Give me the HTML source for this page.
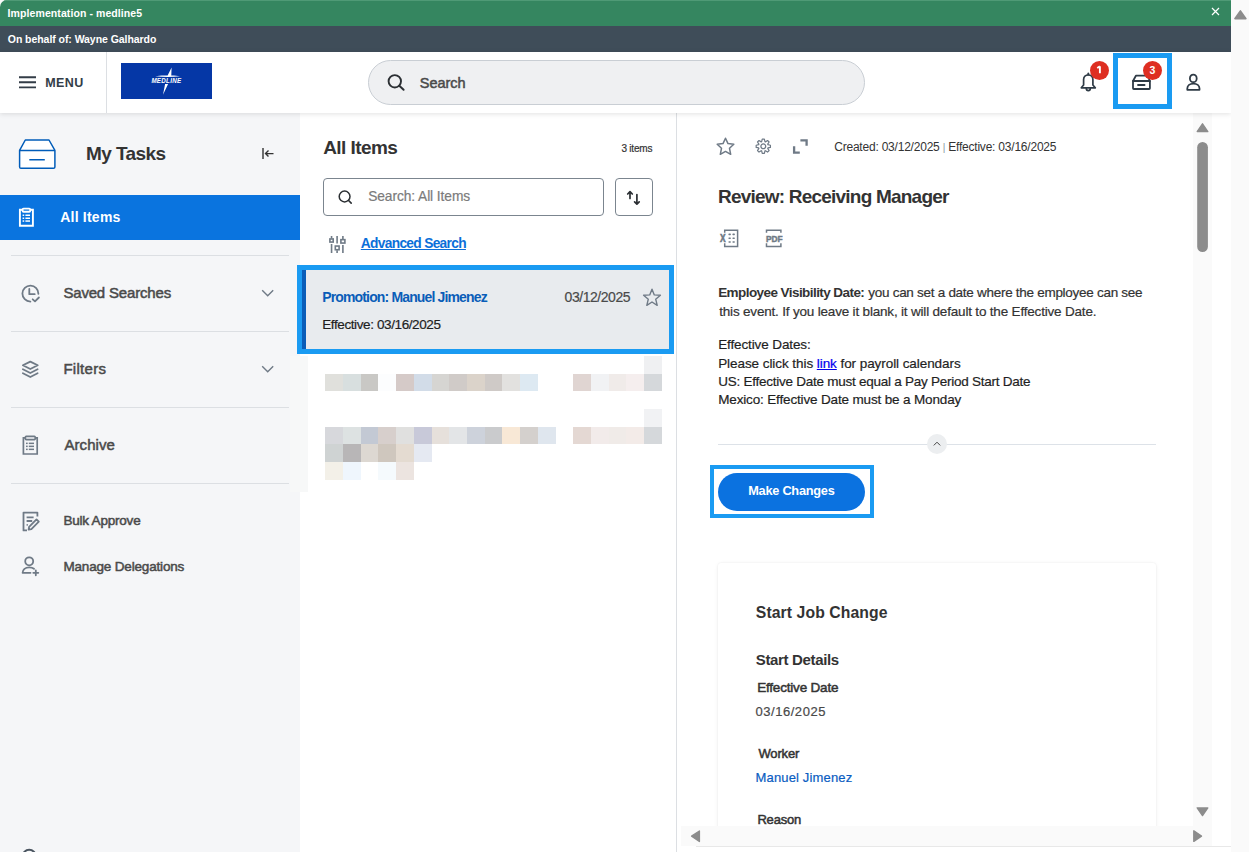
<!DOCTYPE html>
<html><head><meta charset="utf-8">
<style>
*{box-sizing:border-box;margin:0;padding:0}
html,body{width:1249px;height:852px;overflow:hidden;background:#fafafa;font-family:"Liberation Sans",sans-serif;color:#333}
.a{position:absolute}
.t{position:absolute;white-space:nowrap;line-height:normal;z-index:5}
.bl{display:inline-block;width:0;height:0;vertical-align:baseline}
.m{-webkit-text-stroke:0.5px currentColor}
.r2{-webkit-text-stroke:0.2px currentColor}
svg{position:absolute;overflow:visible}
#win{position:absolute;left:0;top:0;width:1231px;height:852px;background:#fff;overflow:hidden;border-top-left-radius:7px}
.div{position:absolute;left:11px;width:278px;height:1px;background:#dcdfe3}
.ic{fill:none;stroke:#6f7a86;stroke-width:1.8;stroke-linecap:round;stroke-linejoin:round}
.ik{fill:none;stroke:#2f3b46;stroke-width:1.8;stroke-linecap:round;stroke-linejoin:round}
</style></head><body>
<div id="win">
  <!-- top bars -->
  <div class="a" style="left:0;top:0;width:1231px;height:26px;background:#358660"></div>
  <div class="a" style="left:0;top:0;width:1231px;height:1px;background:#4f9a76"></div>
  <div class="a" style="left:0;top:26px;width:1231px;height:26px;background:#3f4d59"></div>
  <svg style="left:1212px;top:8px" width="7" height="7" viewBox="0 0 7 7"><path d="M0 0L7 7M7 0L0 7" stroke="#fff" stroke-width="1.2"/></svg>

  <!-- header -->
  <div class="a" style="left:0;top:52px;width:1231px;height:61px;background:#fff;box-shadow:0 1px 5px rgba(0,0,0,.12);z-index:3"></div>
  <div style="position:absolute;left:0;top:52px;width:1231px;height:61px;z-index:4">
    <svg style="left:19px;top:24px" width="17" height="12" viewBox="0 0 17 12"><path d="M0 1.2H17M0 6.3H17M0 11.4H17" stroke="#333d47" stroke-width="1.9"/></svg>
    <div class="a" style="left:106px;top:0;width:1px;height:61px;background:#dcdfe3"></div>
    <div class="a" style="left:121px;top:11px;width:91px;height:36px;background:#0537a6"></div>
    <svg style="left:121px;top:11px" width="91" height="36" viewBox="0 0 91 36">
      <path d="M34.2 13.3Q47 11.3 59.1 13.3Q47 14.9 34.2 13.3Z M46.6 12.4L50.6 4.4L50.3 12.4Z M44.1 20.9L47.1 20.9L42 31.8Z" fill="#fff"/>
      <text x="30.4" y="19.8" font-family="Liberation Sans" font-weight="bold" font-style="italic" font-size="6.3" fill="#fff" letter-spacing="0.3" textLength="30" lengthAdjust="spacingAndGlyphs">MEDLINE</text>
    </svg>
    <div class="a" style="left:368px;top:8px;width:497px;height:45px;border-radius:23px;background:#eff0f2;border:1px solid #c9ced4"></div>
    <svg style="left:386px;top:72px;top:20px" width="20" height="20" viewBox="0 0 20 20"><circle cx="8.8" cy="9.3" r="6.2" fill="none" stroke="#2b2f33" stroke-width="1.9"/><path d="M13.3 13.8L17.6 17.8" stroke="#2b2f33" stroke-width="2" stroke-linecap="round"/></svg>
    <!-- bell -->
    <svg style="left:1076px;top:6px" width="36" height="36" viewBox="0 0 36 36"><g class="ik" style="stroke-width:1.7">
      <path d="M7.6 27V21.5C7.6 18.8 9.7 16.8 12.3 16.8C14.9 16.8 16.9 18.8 16.9 21.5V27L19.3 29.8H5.3Z"/>
      <path d="M10.3 30.6A2 2 0 0 0 14.3 30.6"/>
      <path d="M12.3 15.3V16.6"/></g></svg>
    <div class="a" style="left:1090px;top:9px;width:19px;height:19px;border-radius:50%;background:#de2e21"></div>
    <!-- inbox focus -->
    <div class="a" style="left:1113px;top:1px;width:59px;height:56px;border:5px solid #1a9bf2"></div>
    <svg style="left:1126px;top:6px" width="40" height="36" viewBox="0 0 40 36"><g class="ik">
      <path d="M9.9 17.7H21.5L23.9 23V30.2Q23.9 31 23.1 31H7.8Q7 31 7 30.2V23Z"/>
      <path d="M7 23H23.9"/><path d="M12 27H18.6"/></g></svg>
    <div class="a" style="left:1143px;top:9px;width:19px;height:19px;border-radius:50%;background:#de2e21"></div>
    <!-- person -->
    <svg style="left:1180px;top:16px" width="26" height="26" viewBox="0 0 26 26"><g class="ik">
      <ellipse cx="13.3" cy="10.4" rx="3.4" ry="3.8"/>
      <path d="M7.3 21.8V20.6C7.3 17.6 9.8 15.6 13.4 15.6C17 15.6 19.5 17.6 19.5 20.6V21.8Z"/></g></svg>
  </div>

  <!-- sidebar -->
  <div class="a" style="left:0;top:113px;width:300px;height:739px;background:#f5f6f8"></div>
  <svg style="left:14px;top:134px" width="48" height="40" viewBox="0 0 48 40">
    <path d="M11.3 6H35L40.9 16.4V33Q40.9 34.3 39.5 34.3H7Q5.6 34.3 5.6 33V16.4Z" fill="#fff" stroke="#005cb9" stroke-width="1.5" stroke-linejoin="round"/>
    <path d="M5.6 16.4H40.9M15.3 25.7H30.8" stroke="#005cb9" stroke-width="1.5" fill="none"/></svg>
  <svg style="left:256px;top:140px" width="24" height="24" viewBox="0 0 24 24"><path d="M7 8V19M17.5 13.6H9.5M12.5 10.6L9.5 13.6L12.5 16.6" fill="none" stroke="#333" stroke-width="1.4"/></svg>
  <div class="a" style="left:0;top:195px;width:300px;height:45px;background:#0a74df"></div>
  <svg style="left:14px;top:200px" width="30" height="32" viewBox="0 0 30 32"><g fill="none" stroke="#fff" stroke-width="1.9">
    <path d="M8.3 9.8H5.9V25.8H18.9V9.8H16.5"/>
    <rect x="8.6" y="8.6" width="7.6" height="3.2" rx="1"/></g>
    <g fill="#fff"><rect x="8.6" y="14.5" width="1.6" height="1.5"/><rect x="11.4" y="14.5" width="4.6" height="1.5"/>
    <rect x="8.6" y="17.5" width="1.6" height="1.5"/><rect x="11.4" y="17.5" width="4.6" height="1.5"/>
    <rect x="8.6" y="20.3" width="1.6" height="1.5"/><rect x="11.4" y="20.3" width="4.6" height="1.5"/></g></svg>
  <div class="div" style="top:255px"></div>
  <svg style="left:16px;top:278px" width="30" height="30" viewBox="0 0 30 30"><g class="ic">
    <path d="M14.4 23.6A8 8 0 1 1 22.4 15.8"/><path d="M13.3 11V16.2H18.7"/><path d="M16.7 21.3L19 23.4L22.9 19.5"/></g></svg>
  <svg style="left:256px;top:282px" width="24" height="24" viewBox="0 0 24 24"><path d="M6.2 8.3L11.7 13.8L17.2 8.3" fill="none" stroke="#6f7a86" stroke-width="1.4"/></svg>
  <div class="div" style="top:331px"></div>
  <svg style="left:16px;top:354px" width="30" height="30" viewBox="0 0 30 30"><g class="ic">
    <path d="M14.3 7.6L21.7 11.3L14.3 15L6.9 11.3Z"/><path d="M6.9 15.3L14.3 19L21.6 15.3"/><path d="M6.9 19.2L14.3 23L21.6 19.2"/></g></svg>
  <svg style="left:256px;top:358px" width="24" height="24" viewBox="0 0 24 24"><path d="M6.2 8.3L11.7 13.8L17.2 8.3" fill="none" stroke="#6f7a86" stroke-width="1.4"/></svg>
  <div class="div" style="top:407px"></div>
  <svg style="left:16px;top:428px" width="30" height="32" viewBox="0 0 30 32"><g fill="none" stroke="#6f7a86" stroke-width="1.7">
    <path d="M9.3 9.8H7.4V26H21.2V9.8H19.3"/>
    <rect x="9.4" y="8.4" width="9.8" height="3.2" rx="0.8"/></g>
    <g fill="#6f7a86"><rect x="10" y="14.6" width="1.7" height="1.5"/><rect x="12.8" y="14.6" width="5.2" height="1.5"/>
    <rect x="10" y="17.6" width="1.7" height="1.5"/><rect x="12.8" y="17.6" width="5.2" height="1.5"/>
    <rect x="10" y="20.6" width="1.7" height="1.5"/><rect x="12.8" y="20.6" width="5.2" height="1.5"/></g></svg>
  <div class="div" style="top:483px"></div>
  <svg style="left:16px;top:505px" width="30" height="30" viewBox="0 0 30 30"><g class="ic" style="stroke-linecap:butt">
    <path d="M11 25.4H7.5V7.6H21.4V11.5"/><path d="M10.6 12.3H17.6M10.6 16H16.2M10.6 19.8H11.8"/>
    <path d="M12.6 24.6L13.1 21.8L20.5 14.4L22.8 16.7L15.4 24.1Z"/></g></svg>
  <svg style="left:16px;top:505px" width="30" height="75" viewBox="0 0 30 75"><g class="ic">
    <circle cx="13.2" cy="56.3" r="4"/><path d="M14.5 67.8H6.6C6.6 64.6 9.3 62.3 13.2 62.3C15.2 62.3 16.8 62.8 18 63.8"/>
    <path d="M19.8 65.3V70.3M17.3 67.8H22.3"/></g></svg>
  <svg style="left:10px;top:830px" width="50" height="30" viewBox="0 0 50 30"><circle cx="19.2" cy="26.3" r="6.5" fill="none" stroke="#4a5560" stroke-width="2"/></svg>

  <!-- middle -->
  <div class="a" style="left:676px;top:113px;width:1px;height:739px;background:#dcdfe3"></div>
  <div class="a" style="left:323px;top:178px;width:281px;height:37.5px;border:1px solid #7b858f;border-radius:4px"></div>
  <svg style="left:324px;top:182px" width="32" height="30" viewBox="0 0 32 30"><circle cx="20.6" cy="14.5" r="5.4" fill="none" stroke="#2b2f33" stroke-width="1.5"/><path d="M24.6 18.5L27.2 21.1" stroke="#2b2f33" stroke-width="1.6" stroke-linecap="round"/></svg>
  <div class="a" style="left:615px;top:178px;width:38px;height:37.5px;border:1px solid #7b858f;border-radius:4px"></div>
  <svg style="left:616px;top:180px" width="36" height="36" viewBox="0 0 36 36"><g fill="none" stroke="#2b2f33" stroke-width="1.7" stroke-linecap="round" stroke-linejoin="round">
    <path d="M14 11.8V18.4M11.7 14L14 11.6L16.3 14"/><path d="M20.9 14.6V24M18.6 21.8L20.9 24.2L23.2 21.8"/></g></svg>
  <svg style="left:324px;top:230px" width="32" height="30" viewBox="0 0 32 30"><g stroke="#6f7a86" stroke-width="1.6" fill="none">
    <path d="M7.56 5.9V8.4M7.56 14.1V22.9M13.1 5.9V13.6M13.1 20.3V22.9M18.9 5.9V9.1M18.9 15.1V22.9"/>
    <rect x="5.9" y="8.95" width="3.3" height="3.1"/><rect x="11.3" y="16.05" width="3.8" height="3.7"/><rect x="16.9" y="9.65" width="4" height="3.4"/></g></svg>
  <!-- selected item -->
  <div class="a" style="left:297px;top:265px;width:377px;height:89px;border:5px solid #1a9bf2;background:#e8ebee"></div>
  <div class="a" style="left:302px;top:270px;width:4px;height:79px;background:#0a5db8"></div>
  <svg style="left:640px;top:285px" width="24" height="24" viewBox="0 0 24 24"><path d="M12 4.2L14.3 9.9L20.4 10.3L15.7 14.2L17.2 20.3L12 17L6.8 20.3L8.3 14.2L3.6 10.3L9.7 9.9Z" fill="none" stroke="#6f7a86" stroke-width="1.4" stroke-linejoin="round"/></svg>
  <div class="a" style="left:290px;top:356px;width:18px;height:136px;background:#f7f8f8"></div>
<div class="a" style="left:644px;top:356px;width:18px;height:18px;background:#eff0f2"></div>
<div class="a" style="left:325px;top:374px;width:18px;height:17px;background:#e0e0dc"></div>
<div class="a" style="left:343px;top:374px;width:18px;height:17px;background:#d8dfdf"></div>
<div class="a" style="left:361px;top:374px;width:17px;height:17px;background:#c9c8c5"></div>
<div class="a" style="left:378px;top:374px;width:18px;height:17px;background:#fcfdfe"></div>
<div class="a" style="left:396px;top:374px;width:18px;height:17px;background:#d5cac8"></div>
<div class="a" style="left:414px;top:374px;width:18px;height:17px;background:#d2dce8"></div>
<div class="a" style="left:432px;top:374px;width:17px;height:17px;background:#d6d5d2"></div>
<div class="a" style="left:449px;top:374px;width:18px;height:17px;background:#d0cbc8"></div>
<div class="a" style="left:467px;top:374px;width:18px;height:17px;background:#dbd3ca"></div>
<div class="a" style="left:485px;top:374px;width:17px;height:17px;background:#cfcac7"></div>
<div class="a" style="left:502px;top:374px;width:18px;height:17px;background:#e2e1df"></div>
<div class="a" style="left:520px;top:374px;width:18px;height:17px;background:#dde9f2"></div>
<div class="a" style="left:573px;top:374px;width:18px;height:17px;background:#e0d5d2"></div>
<div class="a" style="left:591px;top:374px;width:18px;height:17px;background:#f1f2f4"></div>
<div class="a" style="left:609px;top:374px;width:17px;height:17px;background:#f0ebe9"></div>
<div class="a" style="left:626px;top:374px;width:18px;height:17px;background:#f5eeee"></div>
<div class="a" style="left:644px;top:374px;width:18px;height:17px;background:#d5d8db"></div>
<div class="a" style="left:644px;top:409px;width:18px;height:18px;background:#f1f2f4"></div>
<div class="a" style="left:325px;top:427px;width:18px;height:17px;background:#d7d8dc"></div>
<div class="a" style="left:343px;top:427px;width:18px;height:17px;background:#dde2e2"></div>
<div class="a" style="left:361px;top:427px;width:17px;height:17px;background:#c3c9d4"></div>
<div class="a" style="left:378px;top:427px;width:18px;height:17px;background:#d7cfcc"></div>
<div class="a" style="left:396px;top:427px;width:18px;height:17px;background:#e0e0df"></div>
<div class="a" style="left:414px;top:427px;width:18px;height:17px;background:#c8c9d9"></div>
<div class="a" style="left:432px;top:427px;width:17px;height:17px;background:#e6e0db"></div>
<div class="a" style="left:449px;top:427px;width:18px;height:17px;background:#e3e5e7"></div>
<div class="a" style="left:467px;top:427px;width:18px;height:17px;background:#cdd2db"></div>
<div class="a" style="left:485px;top:427px;width:17px;height:17px;background:#cacbcd"></div>
<div class="a" style="left:502px;top:427px;width:18px;height:17px;background:#f8e8d6"></div>
<div class="a" style="left:520px;top:427px;width:18px;height:17px;background:#d4d0cd"></div>
<div class="a" style="left:538px;top:427px;width:18px;height:17px;background:#dfe6ee"></div>
<div class="a" style="left:573px;top:427px;width:18px;height:17px;background:#e4d8d3"></div>
<div class="a" style="left:591px;top:427px;width:18px;height:17px;background:#f2ebea"></div>
<div class="a" style="left:609px;top:427px;width:17px;height:17px;background:#f0ebe8"></div>
<div class="a" style="left:626px;top:427px;width:18px;height:17px;background:#f3ebe8"></div>
<div class="a" style="left:644px;top:427px;width:18px;height:17px;background:#d5d8db"></div>
<div class="a" style="left:325px;top:444px;width:18px;height:18px;background:#cfd3d3"></div>
<div class="a" style="left:343px;top:444px;width:18px;height:18px;background:#b8b6b7"></div>
<div class="a" style="left:361px;top:444px;width:17px;height:18px;background:#ddd8d2"></div>
<div class="a" style="left:378px;top:444px;width:18px;height:18px;background:#cfc7be"></div>
<div class="a" style="left:396px;top:444px;width:18px;height:18px;background:#e4dbd1"></div>
<div class="a" style="left:414px;top:444px;width:18px;height:18px;background:#e5e9f2"></div>
<div class="a" style="left:325px;top:462px;width:18px;height:18px;background:#f3f0e8"></div>
<div class="a" style="left:343px;top:462px;width:18px;height:18px;background:#eff6fd"></div>
<div class="a" style="left:378px;top:462px;width:18px;height:18px;background:#f5fafd"></div>
<div class="a" style="left:396px;top:462px;width:18px;height:18px;background:#ece4e0"></div>

  <!-- right panel -->
  <svg style="left:712px;top:132px" width="100" height="28" viewBox="0 0 100 28"><g fill="none" stroke="#6f7a86" stroke-width="1.5" stroke-linejoin="round">
    <path d="M13.5 6.3L16 11.6L21.8 12.3L17.5 16.3L18.7 22.3L13.5 19.4L8.3 22.3L9.5 16.3L5.2 12.3L11 11.6Z"/></g>
    <g transform="translate(51.3 14.3)"><path id="gear" d="M-1.63 -4.62 L-1.08 -7.12 L1.08 -7.12 L1.63 -4.62 L2.11 -4.42 L4.27 -5.79 L5.79 -4.27 L4.42 -2.11 L4.62 -1.63 L7.12 -1.08 L7.12 1.08 L4.62 1.63 L4.42 2.11 L5.79 4.27 L4.27 5.79 L2.11 4.42 L1.63 4.62 L1.08 7.12 L-1.08 7.12 L-1.63 4.62 L-2.11 4.42 L-4.27 5.79 L-5.79 4.27 L-4.42 2.11 L-4.62 1.63 L-7.12 1.08 L-7.12 -1.08 L-4.62 -1.63 L-4.42 -2.11 L-5.79 -4.27 L-4.27 -5.79 L-2.11 -4.42Z" fill="none" stroke="#6f7a86" stroke-width="1.2" stroke-linejoin="round"/><circle r="2.4" fill="none" stroke="#6f7a86" stroke-width="1.3"/></g>
    <path d="M88.4 8.3H94.6V13.8M82.1 14.3V20.7H87.8" fill="none" stroke="#6f7a86" stroke-width="2.3"/></svg>
  <svg style="left:714px;top:224px" width="76" height="28" viewBox="0 0 76 28"><g fill="none" stroke="#6f7a86" stroke-width="1.5">
    <path d="M10.7 8.8V6.2H23.6V22.4H10.7V19.2"/><path d="M52.5 8.8V6.2H66.9V8.8M52.5 19.3V22.4H66.9V19.3"/></g>
    <text x="6.1" y="17.7" font-family="Liberation Sans" style="font-weight:700" font-size="10.6" fill="#6f7a86" stroke="#6f7a86" stroke-width="0.6" textLength="5.6" lengthAdjust="spacingAndGlyphs">X</text>
    <g fill="#6f7a86"><rect x="14.4" y="9.6" width="2.5" height="1.6" rx=".7"/><rect x="18.4" y="9.6" width="2.5" height="1.6" rx=".7"/>
    <rect x="14.4" y="13.4" width="2.5" height="1.6" rx=".7"/><rect x="18.4" y="13.4" width="2.5" height="1.6" rx=".7"/>
    <rect x="14.4" y="17.2" width="2.5" height="1.6" rx=".7"/><rect x="18.4" y="17.2" width="2.5" height="1.6" rx=".7"/></g>
    <text x="52" y="17.7" font-family="Liberation Sans" style="font-weight:700" font-size="9.6" fill="#6f7a86" stroke="#6f7a86" stroke-width="0.5" textLength="16.6" lengthAdjust="spacingAndGlyphs">PDF</text></svg>
  <div class="a" style="left:718px;top:444px;width:438px;height:1px;background:#dde2e8"></div>
  <div class="a" style="left:927px;top:434px;width:20px;height:20px;border-radius:50%;background:#eceef0"></div>
  <svg style="left:927px;top:434px" width="20" height="20" viewBox="0 0 20 20"><path d="M6.8 11.4L10 8.2L13.2 11.4" fill="none" stroke="#444" stroke-width="1"/></svg>
  <div class="a" style="left:710px;top:465px;width:164px;height:53px;border:4.6px solid #1a9bf2"></div>
  <div class="a" style="left:718px;top:473px;width:147px;height:38px;border-radius:19px;background:#0b72e0"></div>
  <div class="a" style="left:718px;top:563px;width:438px;height:283px;background:#fff;border-radius:3px 3px 0 0;box-shadow:0 0 2px rgba(0,0,0,.08),0 1px 5px rgba(0,0,0,.05);clip-path:inset(-10px -10px 0 -10px)"></div>

  <!-- scrollbars -->
  <div class="a" style="left:1193px;top:113px;width:19px;height:733px;background:#fafafa"></div>
  <svg style="left:1193px;top:113px" width="19" height="740" viewBox="0 0 19 740"><g fill="#8c8c8c" stroke="#8c8c8c" stroke-width="1.4" stroke-linejoin="round">
    <path d="M9.5 10.8L14.8 18.6H4.2Z"/><path d="M4.2 694.9H14.8L9.5 702.6Z"/></g>
    <rect x="4.2" y="29" width="10.7" height="110" rx="5.35" fill="#8c8c8c"/></svg>
  <div class="a" style="left:681px;top:826px;width:512px;height:19.5px;background:#fafafa"></div>
  <div class="a" style="left:696px;top:846px;width:535px;height:1px;background:#e8e8e8"></div>
  <svg style="left:681px;top:826px" width="530" height="20" viewBox="0 0 530 20"><g fill="#8c8c8c" stroke="#8c8c8c" stroke-width="1.4" stroke-linejoin="round">
    <path d="M18.4 5L18.4 15.5L10.6 10.2Z"/><path d="M512.8 4.8V15.4L520.5 10.1Z"/></g></svg>
  <div class="t" id="title" style="left:7.60px;top:7.00px;font-size:10.50px;letter-spacing:0.087px;font-weight:bold;color:#ffffff;">Implementation - medline5<span class="bl"></span></div>
<div class="t" id="behalf" style="left:7.80px;top:32.71px;font-size:10.50px;letter-spacing:-0.059px;font-weight:bold;color:#ffffff;">On behalf of: Wayne Galhardo<span class="bl"></span></div>
<div class="t" id="menu" style="left:45.20px;top:75.90px;font-size:12.50px;letter-spacing:0.433px;font-weight:bold;color:#333d47;">MENU<span class="bl"></span></div>
<div class="t m" id="hsearch" style="left:419.80px;top:74.90px;font-size:14.50px;letter-spacing:-0.040px;font-weight:normal;color:#4a4a4a;">Search<span class="bl"></span></div>
<div class="t" id="mytasks" style="left:86.00px;top:142.61px;font-size:19.00px;letter-spacing:-0.586px;font-weight:bold;color:#333333;">My Tasks<span class="bl"></span></div>
<div class="t" id="sallitems" style="left:60.20px;top:209.01px;font-size:14.00px;letter-spacing:0.225px;font-weight:bold;color:#ffffff;">All Items<span class="bl"></span></div>
<div class="t m" id="saved" style="left:63.40px;top:284.01px;font-size:15.00px;letter-spacing:-0.177px;font-weight:normal;color:#4a4a4a;">Saved Searches<span class="bl"></span></div>
<div class="t m" id="filters" style="left:63.40px;top:360.11px;font-size:15.00px;letter-spacing:0.300px;font-weight:normal;color:#4a4a4a;">Filters<span class="bl"></span></div>
<div class="t m" id="archive" style="left:64.40px;top:436.32px;font-size:15.00px;letter-spacing:0.083px;font-weight:normal;color:#4a4a4a;">Archive<span class="bl"></span></div>
<div class="t m" id="bulk" style="left:63.40px;top:513.21px;font-size:13.50px;letter-spacing:-0.209px;font-weight:normal;color:#4a4a4a;">Bulk Approve<span class="bl"></span></div>
<div class="t m" id="manage" style="left:63.40px;top:558.61px;font-size:13.50px;letter-spacing:-0.171px;font-weight:normal;color:#4a4a4a;">Manage Delegations<span class="bl"></span></div>
<div class="t" id="mallitems" style="left:323.20px;top:137.11px;font-size:19.00px;letter-spacing:-0.575px;font-weight:bold;color:#333333;">All Items<span class="bl"></span></div>
<div class="t r2" id="nitems" style="left:621.40px;top:142.50px;font-size:10.00px;letter-spacing:-0.200px;font-weight:normal;color:#333333;">3 items<span class="bl"></span></div>
<div class="t r2" id="searchall" style="left:368.20px;top:189.41px;font-size:13.75px;letter-spacing:-0.075px;font-weight:normal;color:#7b7b7b;">Search: All Items<span class="bl"></span></div>
<div class="t" id="adv" style="left:360.80px;top:235.50px;font-size:13.75px;letter-spacing:-0.686px;font-weight:bold;color:#0b6fd9;text-decoration:underline;text-underline-offset:1px">Advanced Search<span class="bl"></span></div>
<div class="t" id="promo" style="left:322.20px;top:288.51px;font-size:14.00px;letter-spacing:-0.850px;font-weight:bold;color:#0a5db8;">Promotion: Manuel Jimenez<span class="bl"></span></div>
<div class="t r2" id="date1" style="left:564.60px;top:288.51px;font-size:14.00px;letter-spacing:-0.456px;font-weight:normal;color:#4a4a4a;">03/12/2025<span class="bl"></span></div>
<div class="t r2" id="eff1" style="left:322.20px;top:317.31px;font-size:13.50px;letter-spacing:-0.390px;font-weight:normal;color:#1e1e1e;">Effective: 03/16/2025<span class="bl"></span></div>
<div class="t" id="created" style="left:834.20px;top:139.81px;font-size:12.00px;letter-spacing:-0.212px;font-weight:normal;color:#333333;">Created: 03/12/2025 <span style="font-size:10px;color:#8a939c;-webkit-text-stroke:0">|</span> Effective: 03/16/2025<span class="bl"></span></div>
<div class="t" id="review" style="left:718.00px;top:186.20px;font-size:19.00px;letter-spacing:-0.787px;font-weight:bold;color:#333333;">Review: Receiving Manager<span class="bl"></span></div>
<div class="t" id="p1" style="left:718.20px;top:284.71px;font-size:13.50px;letter-spacing:-0.569px;font-weight:bold;color:#333333;">Employee Visibility Date:<span class="bl"></span></div>
<div class="t r2" id="p1b" style="left:868.30px;top:284.71px;font-size:13.50px;letter-spacing:-0.283px;font-weight:normal;color:#333333;">you can set a date where the employee can see<span class="bl"></span></div>
<div class="t r2" id="p2" style="left:719.20px;top:303.51px;font-size:13.50px;letter-spacing:-0.186px;font-weight:normal;color:#333333;">this event. If you leave it blank, it will default to the Effective Date.<span class="bl"></span></div>
<div class="t r2" id="p3" style="left:718.20px;top:337.21px;font-size:13.50px;letter-spacing:-0.120px;font-weight:normal;color:#1f1f1f;">Effective Dates:<span class="bl"></span></div>
<div class="t r2" id="p4" style="left:718.20px;top:355.71px;font-size:13.50px;letter-spacing:-0.067px;font-weight:normal;color:#1f1f1f;">Please click this <u style="color:#0000ee">link</u> for payroll calendars<span class="bl"></span></div>
<div class="t r2" id="p5" style="left:718.20px;top:373.71px;font-size:13.50px;letter-spacing:-0.254px;font-weight:normal;color:#1f1f1f;">US: Effective Date must equal a Pay Period Start Date<span class="bl"></span></div>
<div class="t r2" id="p6" style="left:718.20px;top:391.81px;font-size:13.50px;letter-spacing:-0.153px;font-weight:normal;color:#1f1f1f;">Mexico: Effective Date must be a Monday<span class="bl"></span></div>
<div class="t" id="mkch" style="left:748.20px;top:482.81px;font-size:12.75px;letter-spacing:-0.245px;font-weight:bold;color:#ffffff;">Make Changes<span class="bl"></span></div>
<div class="t" id="sjc" style="left:755.80px;top:604.00px;font-size:15.75px;letter-spacing:0.087px;font-weight:bold;color:#333333;">Start Job Change<span class="bl"></span></div>
<div class="t" id="sdet" style="left:755.80px;top:650.90px;font-size:15.00px;letter-spacing:-0.350px;font-weight:bold;color:#333333;">Start Details<span class="bl"></span></div>
<div class="t m" id="effdate" style="left:757.20px;top:680.40px;font-size:13.50px;letter-spacing:-0.192px;font-weight:normal;color:#333333;">Effective Date<span class="bl"></span></div>
<div class="t r2" id="date2" style="left:755.40px;top:703.90px;font-size:13.00px;letter-spacing:0.556px;font-weight:normal;color:#494949;">03/16/2025<span class="bl"></span></div>
<div class="t m" id="worker" style="left:758.40px;top:745.90px;font-size:13.00px;letter-spacing:-0.140px;font-weight:normal;color:#333333;">Worker<span class="bl"></span></div>
<div class="t r2" id="mj" style="left:755.60px;top:770.11px;font-size:13.00px;letter-spacing:0.146px;font-weight:normal;color:#0a5dc2;">Manuel Jimenez<span class="bl"></span></div>
<div class="t m" id="reason" style="left:757.40px;top:812.01px;font-size:13.00px;letter-spacing:-0.180px;font-weight:normal;color:#333333;">Reason<span class="bl"></span></div>
<svg style="left:1090px;top:61px;z-index:6" width="19" height="19" viewBox="0 0 19 19"><path d="M9.9 5.2V12.2M7.2 7L9.9 5.4" stroke="#fff" stroke-width="1.9" fill="none" stroke-linejoin="round"/></svg>
<div class="t" style="left:1143px;top:61px;width:19px;text-align:center;font-size:10.5px;font-weight:bold;color:#fff;line-height:19px;z-index:6">3</div>
</div>
<svg style="left:1231px;top:0" width="18" height="30" viewBox="0 0 18 30"><path d="M9.4 10.9L14.9 18.6H3.9Z" fill="#8c8c8c" stroke="#8c8c8c" stroke-width="1.6" stroke-linejoin="round"/></svg>
</body></html>
